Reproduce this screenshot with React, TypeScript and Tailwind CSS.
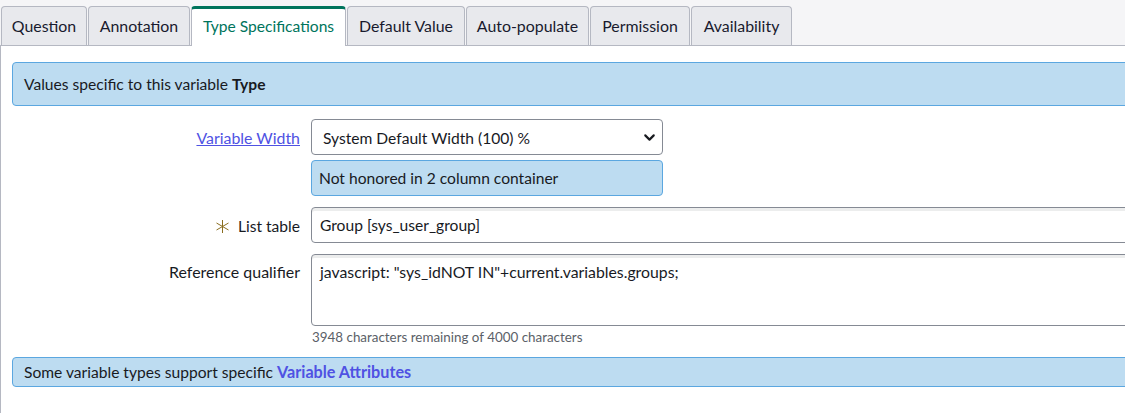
import { ChevronDown } from 'lucide-react'

const tabs = [
  { label: 'Question', width: 'w-[86px]' },
  { label: 'Annotation', width: 'w-[102px]' },
  { label: 'Type Specifications', width: 'w-[155px]', active: true },
  { label: 'Default Value', width: 'w-[118px]' },
  { label: 'Auto-populate', width: 'w-[123px]' },
  { label: 'Permission', width: 'w-[100px]' },
  { label: 'Availability', width: 'w-[101px]' },
]

function Tabs() {
  return (
    <div className="flex h-[46px] gap-px border-b border-[#b5b8c2] bg-[#f5f5f7] pt-[6px] pl-px">
      {tabs.map((t) =>
        t.active ? (
          <div
            key={t.label}
            className={`${t.width} relative z-10 flex h-[40px] items-center justify-center rounded-t-[4px] border-x border-t-[3px] border-x-[#b5b8c2] border-t-[#00745c] bg-white pb-[1px] text-[15.6px] text-[#00745c]`}
          >
            {t.label}
          </div>
        ) : (
          <div
            key={t.label}
            className={`${t.width} flex h-[39px] items-center justify-center rounded-t-[4px] border-x border-t border-[#b5b8c2] bg-[#e8e9ed] text-[15.9px] text-[#181a2e]`}
          >
            {t.label}
          </div>
        ),
      )}
    </div>
  )
}

function Label({ children }: { children: React.ReactNode }) {
  return <div className="w-[288px] shrink-0 text-right text-[15.6px] text-[#181a1f]">{children}</div>
}

export default function App() {
  return (
    <div className="h-[413px] w-[1125px] overflow-hidden bg-white font-['Lato','Noto_Sans',sans-serif] text-[15.6px] text-[#181a1f]">
      <Tabs />
      <div className="h-[367px] border-l border-[#b5b8c2] pt-[16px] pl-[11px]">
        <div className="flex h-[44px] w-[1200px] items-center rounded-[4px] border border-[#5ba7e0] bg-[#bddcf1] pt-[2px] pl-[11px]">
          <span>
            Values specific to this variable <b>Type</b>
          </span>
        </div>

        {/* Variable width */}
        <div className="mt-[13px] flex items-center">
          <Label>
            <a className="block pt-[2px] text-[15.9px] text-[#4f52e3] underline">Variable Width</a>
          </Label>
          <div className="relative ml-[11px] w-[352px]">
            <select className="block h-[36px] w-full appearance-none rounded-[4px] border border-[#858a94] bg-white pt-[4px] pl-[11px] text-[15.6px]">
              <option>System Default Width (100) %</option>
            </select>
            <ChevronDown size={17} strokeWidth={3} className="absolute top-[10px] right-[5px] text-[#181a1f]" />
          </div>
        </div>
        <div className="mt-[5px] ml-[299px] flex h-[36px] w-[352px] items-center rounded-[4px] border border-[#5ba7e0] bg-[#bddcf1] pt-[2px] pl-[7px]">
          Not honored in 2 column container
        </div>

        {/* List table */}
        <div className="mt-[11px] flex items-center">
          <Label>
            <div className="pt-[3px]">
              <span className="mr-[8px] inline-block align-[-2px]">
                <svg width="15" height="15" viewBox="0 0 15 15" fill="none" stroke="#8a6d1f" strokeWidth="1">
                  <path d="M7.5 1v13M1.5 4l12 7M13.5 4l-12 7" />
                </svg>
              </span>
              List table
            </div>
          </Label>
          <input
            readOnly
            value="Group [sys_user_group]"
            className="ml-[11px] h-[36px] w-[900px] shrink-0 rounded-[4px] border border-[#858a94] bg-white pl-[8px] text-[15.6px] shadow-[inset_0_3px_0_#eceded] outline-none"
          />
        </div>

        {/* Reference qualifier */}
        <div className="mt-[11px] flex items-start">
          <Label>
            <div className="mt-[6px] text-[15.95px]">Reference qualifier</div>
          </Label>
          <textarea
            readOnly
            value={'javascript: "sys_idNOT IN"+current.variables.groups;'}
            className="ml-[11px] block h-[72px] w-[900px] shrink-0 resize-none rounded-[4px] border border-[#858a94] bg-white px-[8px] pt-[6px] text-[15.8px] leading-[21px] shadow-[inset_0_3px_0_#eceded] outline-none"
          />
        </div>
        <div className="mt-[2px] ml-[300px] h-[18px] text-[13.4px] leading-[18px] text-[#5b5f68]">
          3948 characters remaining of 4000 characters
        </div>

        <div className="mt-[11px] flex h-[30px] w-[1200px] items-center rounded-[4px] border border-[#5ba7e0] bg-[#bddcf1] pl-[11px]">
          <span>
            Some variable types support specific <b className="text-[16.2px] text-[#4f52e3]">Variable Attributes</b>
          </span>
        </div>
      </div>
    </div>
  )
}
